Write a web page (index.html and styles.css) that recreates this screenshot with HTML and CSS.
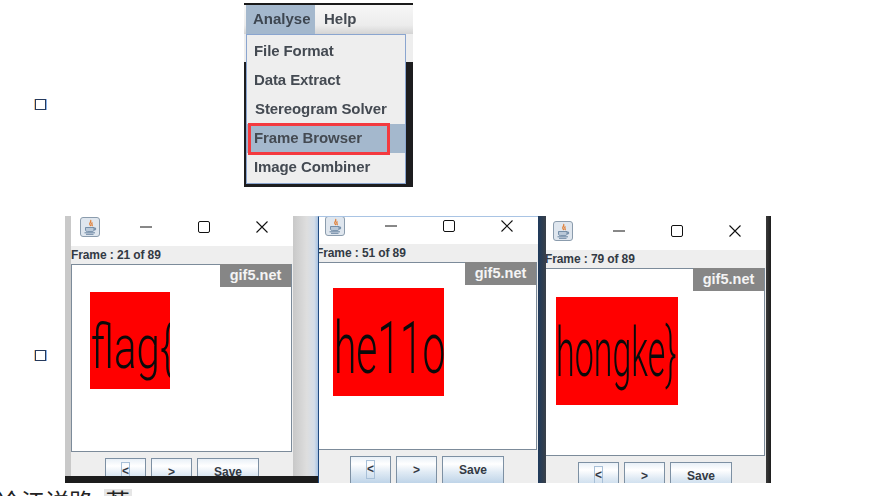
FILE: index.html
```html
<!DOCTYPE html>
<html lang="zh-cn">
<head>
	<meta charset="utf-8"/>
	<title>Frame Browser</title>
	<link rel="stylesheet" href="styles.css">
</head>
<body>
	<svg class="defs" width="0" height="0">
		<symbol id="java" viewBox="0 0 20 20">
			<rect x="0.5" y="0.5" width="19" height="19" rx="2.5" fill="#dfe6ee" stroke="#8b9cad"/>
			<path d="M10.5 3c1.5 1.6-1.6 2.8-.6 4.6.4.7.8 1 .9 1.6M12.4 5.4c-1.2.8-.8 1.6-.3 2.4.3.5.2 1-.1 1.4" fill="none" stroke="#e0803a" stroke-width="1.3"/>
			<path d="M5.5 10.5h8.5v2.5c0 1-1 1.6-2 1.6H7.5c-1 0-2-.6-2-1.6zM14 11h1.6v1.8H14" fill="#b9c8d8" stroke="#5f7c9a" stroke-width=".8"/>
			<path d="M4.5 15.8h10.500M6 17.300h7.500" stroke="#5f7c9a" stroke-width=".9"/>
		</symbol>
		<symbol id="min" viewBox="0 0 12 12"><path d="M0 6h12" stroke="#111" stroke-width="1"/></symbol>
		<symbol id="max" viewBox="0 0 12 12"><rect x=".5" y=".5" width="11" height="11" rx="1.500" fill="none" stroke="#111"/></symbol>
		<symbol id="close" viewBox="0 0 12 12"><path d="M.5.500l11 11M11.500.500l-11 11" stroke="#111" stroke-width="1.100"/></symbol>
	</svg>

	<div class="page">
		<div class="row row-menu">
			<span class="marker marker-menu"></span>
			<div class="menu">
				<div class="menu-bar">
					<span class="menu-title menu-title-on">Analyse</span>
					<span class="menu-title">Help</span>
				</div>
				<ul class="popup">
					<li>File Format</li>
					<li>Data Extract</li>
					<li class="item-shift">Stereogram Solver</li>
					<li class="item-on">Frame Browser<span class="red-mark"></span></li>
					<li>Image Combiner</li>
				</ul>
			</div>
		</div>

		<div class="row row-shots">
			<span class="marker marker-shots"></span>
			<div class="shots">

				<div class="shot shot-a">
					<div class="shot-main">
						<div class="win">
							<div class="title">
								<svg class="ico-java"><use href="#java"/></svg>
								<svg class="ico"><use href="#min"/></svg>
								<svg class="ico"><use href="#max"/></svg>
								<svg class="ico"><use href="#close"/></svg>
							</div>
							<div class="label">Frame : 21 of 89</div>
							<div class="canvas">
								<span class="badge">gif5.net</span>
								<div class="red"><span class="red-text">flag{</span></div>
							</div>
							<div class="buttons">
								<button class="btn"><span class="focus">&lt;</span></button>
								<button class="btn">&gt;</button>
								<button class="btn btn-save">Save</button>
							</div>
						</div>
						<div class="side"></div>
					</div>
					<div class="foot"></div>
				</div>

				<div class="shot shot-b">
					<div class="win">
						<div class="title">
							<svg class="ico-java"><use href="#java"/></svg>
							<svg class="ico"><use href="#min"/></svg>
							<svg class="ico"><use href="#max"/></svg>
							<svg class="ico"><use href="#close"/></svg>
						</div>
						<div class="label">Frame : 51 of 89</div>
						<div class="canvas">
							<span class="badge">gif5.net</span>
							<div class="red"><span class="red-text">he11o</span></div>
						</div>
						<div class="buttons">
							<button class="btn"><span class="focus">&lt;</span></button>
							<button class="btn">&gt;</button>
							<button class="btn btn-save">Save</button>
						</div>
					</div>
				</div>

				<div class="shot shot-c">
					<div class="win">
						<div class="title">
							<svg class="ico-java"><use href="#java"/></svg>
							<svg class="ico"><use href="#min"/></svg>
							<svg class="ico"><use href="#max"/></svg>
							<svg class="ico"><use href="#close"/></svg>
						</div>
						<div class="label">Frame : 79 of 89</div>
						<div class="canvas">
							<span class="badge">gif5.net</span>
							<div class="red"><span class="red-text">hongke}</span></div>
						</div>
						<div class="buttons">
							<button class="btn"><span class="focus">&lt;</span></button>
							<button class="btn">&gt;</button>
							<button class="btn btn-save">Save</button>
						</div>
					</div>
				</div>

			</div>
		</div>

		<h3 class="next">冷江详路 <span class="next-code">荐</span></h3>
	</div>
</body>
</html>
```

FILE: styles.css
```css
* {
	box-sizing: border-box;
}
html, body {
	margin: 0;
	height: 100%;
	overflow: hidden;
	background: #fff;
}
body {
	font-family: "Liberation Sans", Arial, sans-serif;
}
.defs {
	position: absolute;
}
.page {
	width: 877px;
	height: 496px;
	padding-top: 3px;
	overflow: hidden;
}
.row {
	display: flex;
	align-items: flex-start;
	padding-left: 35px;
}
.marker {
	flex: none;
	width: 11px;
	height: 11px;
	border: 1px solid #263a5c;
	box-shadow: -1px 0 0 #f2c694, 1px 0 0 #8cb6ee;
}

/* menu picture */
.row-menu {
	height: 213px;
}
.marker-menu {
	margin-top: 96px;
}
.menu {
	width: 169px;
	height: 184px;
	margin-left: 198px;
	background: linear-gradient(#eee 57px, #1d1d1f 57px);
	border-top: 2px solid #1a1a1a;
	color: #444a52;
	filter: blur(.4px);
}
.menu-bar {
	display: flex;
	height: 29px;
	padding-left: 2px;
	background: linear-gradient(#f6f6f6, #ececec 70%, #d4d4d4);
	font-size: 15px;
	font-weight: bold;
}
.menu-title {
	width: 69px;
	line-height: 27px;
	padding-left: 9px;
}
.menu-title-on {
	padding-left: 7px;
	background: #a4b8cd;
	color: #3d4650;
}
.popup {
	list-style: none;
	width: 160px;
	height: 150px;
	margin: 0 0 0 2px;
	padding: 2px 0 0;
	background: #eee;
	border: 1px solid #8aa5cf;
	font-size: 15px;
	font-weight: bold;
	letter-spacing: -.1px;
}
.popup li {
	position: relative;
	height: 29px;
	line-height: 28px;
	padding-left: 7px;
}
.popup .item-shift {
	padding-left: 8px;
}
.item-on {
	background: #a4b8cd;
}
.red-mark {
	position: absolute;
	left: 1px;
	top: -1px;
	width: 142px;
	height: 32px;
	border: 3px solid #f43a3f;
}

/* three frame browser windows */
.row-shots {
	height: 267px;
}
.marker-shots {
	margin-top: 134px;
}
.shots {
	display: flex;
	margin-left: 19px;
}
.shot {
	height: 267px;
	overflow: hidden;
}
.shot-a {
	width: 253px;
	display: flex;
	flex-direction: column;
	background: #c9c9c9;
}
.shot-main {
	flex: 1;
	display: flex;
	min-height: 0;
	padding-left: 6px;
}
.foot {
	flex: none;
	height: 7px;
	background: #1c1c1c;
}
.side {
	flex: 1;
	background: linear-gradient(90deg, #c8c8c8, #dedede 55%, #d4dde8 85%, #a9c3e2);
}
.shot-b {
	width: 220px;
	border-left: 1px solid #1f4a80;
	border-top: 1px solid #a9c4e4;
}
.shot-c {
	width: 233px;
	padding: 0 5px 0 8px;
	background: linear-gradient(90deg, #1f3a5c, #3a4048) left / 8px 100% no-repeat,
		linear-gradient(90deg, #3a3a3a, #1e1e1e) right / 5px 100% no-repeat;
}
.win {
	display: flex;
	flex-direction: column;
	height: 100%;
	overflow: hidden;
	background: #eee;
}
.shot-a .win {
	width: 222px;
	flex: none;
}
.shot-c .win {
	border-top-right-radius: 5px;
}
.title {
	flex: none;
	display: flex;
	align-items: center;
	gap: 46px;
	background: #fff;
}
.ico-java {
	flex: none;
	width: 20px;
	height: 20px;
	margin-right: -6px;
}
.ico {
	flex: none;
	width: 12px;
	height: 12px;
}
.shot-a .title {
	height: 30px;
	padding: 0 0 8px 9px;
}
.shot-b .title {
	height: 27px;
	padding: 0 0 9px 6px;
}
.shot-c .title {
	height: 34px;
	padding: 0 0 4px 7px;
}
.label {
	flex: none;
	height: 18px;
	line-height: 18px;
	font-size: 12px;
	font-weight: bold;
	letter-spacing: -.1px;
	color: #333a44;
	background: #eee;
	white-space: nowrap;
}
.shot-b .label {
	margin-left: -3px;
	padding-left: 3px;
	text-indent: -3px;
}
.shot-c .label {
	text-indent: -1px;
}
.canvas {
	position: relative;
	flex: none;
	height: 188px;
	margin-right: 1px;
	background: #fff;
	border: 1px solid #7c8b9a;
}
.shot-b .canvas,
.shot-c .canvas {
	border-left: 0;
}
.badge {
	position: absolute;
	top: -1px;
	right: 0;
	width: 71px;
	height: 23px;
	line-height: 23px;
	text-align: center;
	background: #868686;
	color: #f4f4f4;
	font-size: 14.5px;
	font-weight: bold;
}
.red {
	overflow: hidden;
	background: #f00;
	color: #0a0a0a;
	font-family: Roboto, "Liberation Sans", sans-serif;
	font-weight: 300;
}
.red-text {
	display: block;
	transform-origin: 0 0;
	white-space: nowrap;
}
.shot-a .red {
	width: 80px;
	height: 97px;
	margin: 27px 0 0 18px;
}
.shot-a .red-text {
	font-size: 62px;
	line-height: 70px;
	margin-top: 20px;
	transform: translateX(1px) scaleX(.68);
}
.shot-b .red {
	width: 111px;
	height: 108px;
	margin: 25px 0 0 14px;
}
.shot-b .red-text {
	font-size: 72px;
	line-height: 80px;
	margin-top: 21px;
	transform: translateX(1px) scaleX(.565);
}
.shot-c .red {
	width: 122px;
	height: 108px;
	margin: 28px 0 0 10px;
}
.shot-c .red-text {
	font-size: 68px;
	line-height: 76px;
	margin-top: 18px;
	transform: scaleX(.5);
}
.buttons {
	flex: none;
	display: flex;
	gap: 5px;
	padding-top: 6px;
}
.shot-a .buttons {
	padding-left: 34px;
}
.shot-b .buttons {
	padding-left: 31px;
}
.shot-c .buttons {
	padding-left: 32px;
}
.btn {
	flex: none;
	display: flex;
	align-items: center;
	justify-content: center;
	width: 41px;
	height: 30px;
	padding: 0 0 3px;
	border: 1px solid #7d90a3;
	background: linear-gradient(#e9f0f7, #fff 25%, #dfeaf4 55%, #b9d0e6);
	font-family: inherit;
	font-size: 12px;
	font-weight: bold;
	color: #333a44;
}
.btn-save {
	width: 62px;
}
.focus {
	display: block;
	width: 9px;
	height: 19px;
	line-height: 17px;
	border: 1px solid #a8c0d8;
	text-align: center;
}

/* next heading, cut off by the window */
.next {
	margin: 5px 0 0 -3px;
	font-family: "Liberation Sans", "Noto Sans CJK SC", sans-serif;
	font-size: 24px;
	line-height: 30px;
	font-weight: normal;
	color: #222;
}
.next-code {
	margin-left: 4px;
	padding: 0 2px;
	background: #e6e6e6;
}
```
